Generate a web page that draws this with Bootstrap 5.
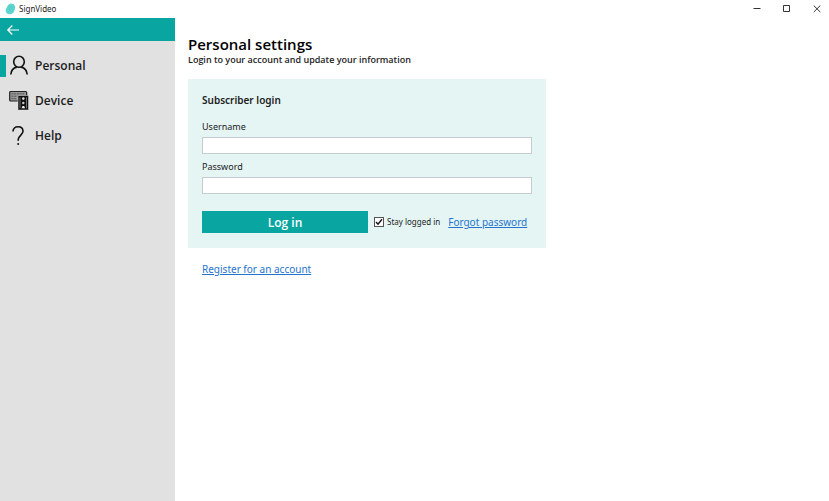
<!DOCTYPE html>
<html lang="en">
<head>
<meta charset="utf-8">
<meta name="viewport" content="width=device-width, initial-scale=1">
<title>SignVideo</title>
<link href="https://cdn.jsdelivr.net/npm/bootstrap@5.3.0/dist/css/bootstrap.min.css" rel="stylesheet">
<style>
:root { --teal: #08a5a1; --mint: #e5f5f4; --side: #e1e1e1; }
body { font-family: "Noto Sans", "Open Sans", sans-serif; font-size: 9px; line-height: 12px; color: #222; background: #fff; }
a { color: #2474cf; }
.titlebar { height: 18px; font-size: 8px; padding-left: 5px; }
.titlebar .app-name { margin-left: 3px; }
.win-group { margin-right: -3px; }
.win-btn { width: 30px; height: 16px; }
.sidebar { width: 175px; background: var(--side); }
.backbar { height: 23px; background: var(--teal); padding-left: 6px; }
.side-menu { padding-top: 14px; gap: 13px; }
.side-link { height: 22px; font-family: "Open Sans", sans-serif; font-size: 12px; font-weight: 600; color: #1c1c1c; border-left: 6px solid transparent; padding-left: 2px; gap: 5px; }
.side-link.current { border-left-color: var(--teal); }
.content { padding: 16px 13px; }
.page-title { font-family: "Open Sans", sans-serif; font-size: 15px; line-height: 20px; font-weight: 600; color: #000; }
.page-sub { font-family: "Open Sans", sans-serif; font-size: 9px; line-height: 12px; font-weight: 600; color: #222; }
.login-panel { max-width: 358px; background: var(--mint); padding: 14px 14px 15px 14px; margin-top: 13px; }
.panel-title { font-size: 10px; line-height: 14px; font-weight: 600; }
.field { margin-top: 14px; }
.field + .field { margin-top: 7px; }
.field .form-label { margin-bottom: 4px; line-height: 12px; font-size: 9px; display: block; }
.field .form-control { height: 17px; font-size: 9px; border: 1px solid #c3cdd0; background: #fff; padding: 0 4px; }
.actions { margin-top: 17px; }
.login-btn { width: 166px; height: 22px; background: var(--teal); color: #fff; font-family: "Open Sans", sans-serif; font-size: 12px; line-height: 16px; font-weight: 600; padding: 2px 0 0; border: 0; }
.login-btn:hover { background: #078f8c; color: #fff; }
.stay { margin-left: 6px; gap: 3px; font-size: 8px; }
.stay input { appearance: none; width: 10px; height: 10px; margin: 0; border: 1px solid #555; background: #fff; }
.stay input:checked { background: #fff url("data:image/svg+xml,%3Csvg xmlns='http://www.w3.org/2000/svg' viewBox='0 0 8 8'%3E%3Cpath d='M1 4l2 2.2L7 1.2' fill='none' stroke='%23111' stroke-width='1.4'/%3E%3C/svg%3E") center / 8px 8px no-repeat; }
.text-link { font-size: 10px; line-height: 14px; }
.forgot { margin-left: 8px; }
.register { margin: 14px 0 0 14px; }
</style>
</head>
<body class="min-vh-100 d-flex flex-column overflow-x-hidden">
<header class="titlebar d-flex align-items-center">
  <svg width="11" height="12" viewBox="0 0 11 12" aria-hidden="true"><path d="M5 .8C6 .1 7 .5 7.4 1.2 8.7.8 9.6 1.5 9.4 2.6 10.5 3.3 10.4 5 9.8 6.5 9.2 9.4 7.4 11.3 4.8 11.3 2 11.4.5 9.6.6 7.3.7 5.7 1.4 4.8 2.1 4 2.7 2.2 3.8 1.2 5 .8z" fill="#62d5d1"/><path d="M3.500 4.500l2-2M3.500 6.500l3.500-3.500M4 8.300l4.300-4.300M5.800 9l2.500-2.500" stroke="#3fc2bd" stroke-width=".6" fill="none"/></svg>
  <span class="app-name">SignVideo</span>
  <div class="win-group ms-auto d-flex">
    <button type="button" class="win-btn btn p-0 border-0 d-flex align-items-center justify-content-center" aria-label="Minimize"><svg width="8" height="8" viewBox="0 0 8 8"><path d="M.5 3.500h7" stroke="#333" fill="none"/></svg></button>
    <button type="button" class="win-btn btn p-0 border-0 d-flex align-items-center justify-content-center" aria-label="Maximize"><svg width="8" height="8" viewBox="0 0 8 8"><path d="M.5.5h6v6h-6z" stroke="#333" fill="none"/></svg></button>
    <button type="button" class="win-btn btn p-0 border-0 d-flex align-items-center justify-content-center" aria-label="Close"><svg width="8" height="8" viewBox="0 0 8 8"><path d="M.7.500l6.600 6.600M7.300.500L.7 7.100" stroke="#333" fill="none"/></svg></button>
  </div>
</header>
<div class="d-flex flex-grow-1">
  <aside class="sidebar flex-shrink-0">
    <div class="backbar d-flex align-items-center">
      <button type="button" class="btn p-0 border-0 d-flex" aria-label="Back"><svg width="14" height="12" viewBox="0 0 14 12"><path d="M13 6H1.800M6.300 1.500L1.800 6l4.500 4.500" fill="none" stroke="#fff" stroke-width="1.200"/></svg></button>
    </div>
    <nav class="side-menu d-flex flex-column">
      <a href="#personal" class="side-link current d-flex align-items-center text-decoration-none" aria-current="page">
        <svg width="22" height="22" viewBox="0 0 22 22" aria-hidden="true"><g fill="none" stroke="#111" stroke-width="1.600"><ellipse cx="11" cy="6.800" rx="5.300" ry="5.500"/><path d="M2.800 19.500c.3-3.800 2.600-6.600 6-7.400M19.200 19.500c-.3-3.800-2.600-6.600-6-7.400"/></g></svg>
        <span>Personal</span></a>
      <a href="#device" class="side-link d-flex align-items-center text-decoration-none">
        <svg width="22" height="22" viewBox="0 0 22 22" aria-hidden="true"><rect x="1.700" y="1.500" width="17" height="9.500" rx="1" fill="#999" stroke="#222" stroke-width="1.200"/><path d="M3.500 3.800h13.500M3.500 6.200h6M3.500 8.600h5" stroke="#555" stroke-width="1" stroke-dasharray="2 .7"/><rect x="10" y="5.500" width="10.500" height="14.500" rx=".6" fill="#111" stroke="#e1e1e1" stroke-width=".5"/><path d="M12 7.300v11M18.500 7.300v11" stroke="#999" stroke-width=".7"/><circle cx="15.300" cy="8.600" r="1.300" fill="#ddd"/><circle cx="15.300" cy="13" r="1.200" fill="#ccc"/><path d="M13.500 18.200l1-2.200h1.600l1 2.200z" fill="#eee"/></svg>
        <span>Device</span></a>
      <a href="#help" class="side-link d-flex align-items-center text-decoration-none">
        <svg width="22" height="22" viewBox="0 0 22 22" aria-hidden="true"><path d="M5 6.500C5 3.500 7.200 1.800 10 1.800c3 0 5 1.700 5 4.500 0 3.600-4.800 4.500-4.800 8.200v1.200" fill="none" stroke="#111" stroke-width="1.600"/><circle cx="10.200" cy="19" r="1" fill="#111"/></svg>
        <span>Help</span></a>
    </nav>
  </aside>
  <main class="content flex-grow-1">
    <h1 class="page-title mb-0">Personal settings</h1>
    <p class="page-sub mb-0">Login to your account and update your information</p>
    <form class="login-panel">
      <h2 class="panel-title mb-0">Subscriber login</h2>
      <div class="field">
        <label for="username" class="form-label">Username</label>
        <input type="text" id="username" class="form-control rounded-0" autocomplete="username">
      </div>
      <div class="field">
        <label for="password" class="form-label">Password</label>
        <input type="password" id="password" class="form-control rounded-0" autocomplete="current-password">
      </div>
      <div class="actions d-flex align-items-center">
        <button type="submit" class="login-btn btn rounded-0">Log in</button>
        <div class="stay d-flex align-items-center">
          <input type="checkbox" id="stay" checked>
          <label for="stay">Stay logged in</label>
        </div>
        <a href="#forgot" class="text-link forgot">Forgot password</a>
      </div>
    </form>
    <p class="register mb-0"><a href="#register" class="text-link">Register for an account</a></p>
  </main>
</div>
<script src="https://cdn.jsdelivr.net/npm/bootstrap@5.3.0/dist/js/bootstrap.bundle.min.js"></script>
</body>
</html>
